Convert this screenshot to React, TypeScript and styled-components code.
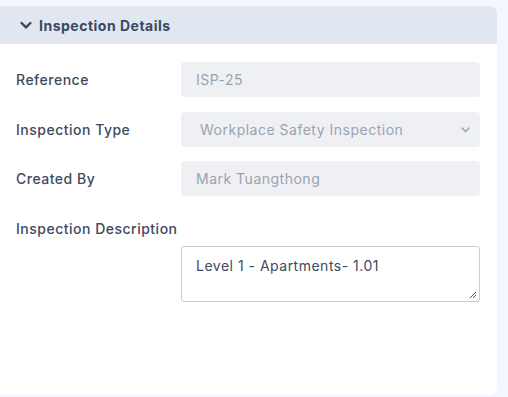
import React from "react";
import styled, { createGlobalStyle } from "styled-components";

const Global = createGlobalStyle`
  html, body { margin: 0; padding: 0; background: #f3f6fd; }
  body { font-family: Inter, "Open Sans", sans-serif; letter-spacing: 0.5px; }
  * { box-sizing: border-box; }
`;

const Page = styled.div`
  width: 508px;
  height: 397px;
  padding-top: 6px;
  background: #f3f6fd;
  overflow: hidden;
`;

const Card = styled.section`
  width: 497px;
  height: 389px;
  background: #ffffff;
  border-radius: 0 8px 8px 0;
  overflow: hidden;
  display: flex;
  flex-direction: column;
`;

const Header = styled.div`
  height: 38px;
  background: #e1e7f0;
  display: flex;
  align-items: center;
  gap: 7px;
  padding-left: 20px;
  color: #3b4760;
  font-size: 14px;
  font-weight: 700;
`;

const Body = styled.div`
  padding: 18px 17px 0 16px;
  display: flex;
  flex-direction: column;
`;

const Row = styled.div<{ $mb?: number }>`
  display: grid;
  grid-template-columns: 165px 1fr;
  align-items: center;
  margin-bottom: ${(p) => p.$mb ?? 15}px;
`;

const Label = styled.label`
  font-size: 14px;
  font-weight: 500;
  color: #3e4a5e;
`;

const Field = styled.div<{ $pl?: number }>`
  height: 35px;
  background: #eff0f4;
  border-radius: 4px;
  display: flex;
  align-items: center;
  justify-content: space-between;
  padding: 0 10px 0 ${(p) => p.$pl ?? 15}px;
  font-size: 14px;
  color: #9ba3b1;
`;

const StackLabel = styled(Label)`
  display: block;
  margin-top: 24px;
  margin-bottom: 9px;
`;

const TextArea = styled.div`
  margin-left: 165px;
  height: 56px;
  border: 1px solid #c9cdd5;
  border-radius: 3px;
  padding: 10px 14px;
  font-size: 14px;
  color: #3d4a5f;
  position: relative;
`;

const Grip = styled.svg`
  position: absolute;
  right: 2px;
  bottom: 2px;
`;

export default function App() {
  return (
    <>
      <Global />
      <Page>
        <Card>
          <Header>
            <svg width="12" height="9" viewBox="0 0 12 9">
              <path d="M1.6 2 L6 6.4 L10.4 2" fill="none" stroke="#3b4760" strokeWidth="2.4" strokeLinecap="round" strokeLinejoin="round" />
            </svg>
            Inspection Details
          </Header>
          <Body>
            <Row>
              <Label>Reference</Label>
              <Field>ISP-25</Field>
            </Row>
            <Row $mb={14}>
              <Label>Inspection Type</Label>
              <Field $pl={19}>
                Workplace Safety Inspection
                <svg width="9" height="6" viewBox="0 0 9 6">
                  <path d="M1 1 L4.5 4.5 L8 1" fill="none" stroke="#9ba3b1" strokeWidth="1.5" strokeLinecap="round" />
                </svg>
              </Field>
            </Row>
            <Row $mb={0}>
              <Label>Created By</Label>
              <Field>Mark Tuangthong</Field>
            </Row>
            <StackLabel>Inspection Description</StackLabel>
            <TextArea>
              Level 1 - Apartments- 1.01
              <Grip width="8" height="8" viewBox="0 0 8 8">
                <path d="M7 1 L1 7 M7 4 L4 7" stroke="#555" strokeWidth="1" />
              </Grip>
            </TextArea>
          </Body>
        </Card>
      </Page>
    </>
  );
}
